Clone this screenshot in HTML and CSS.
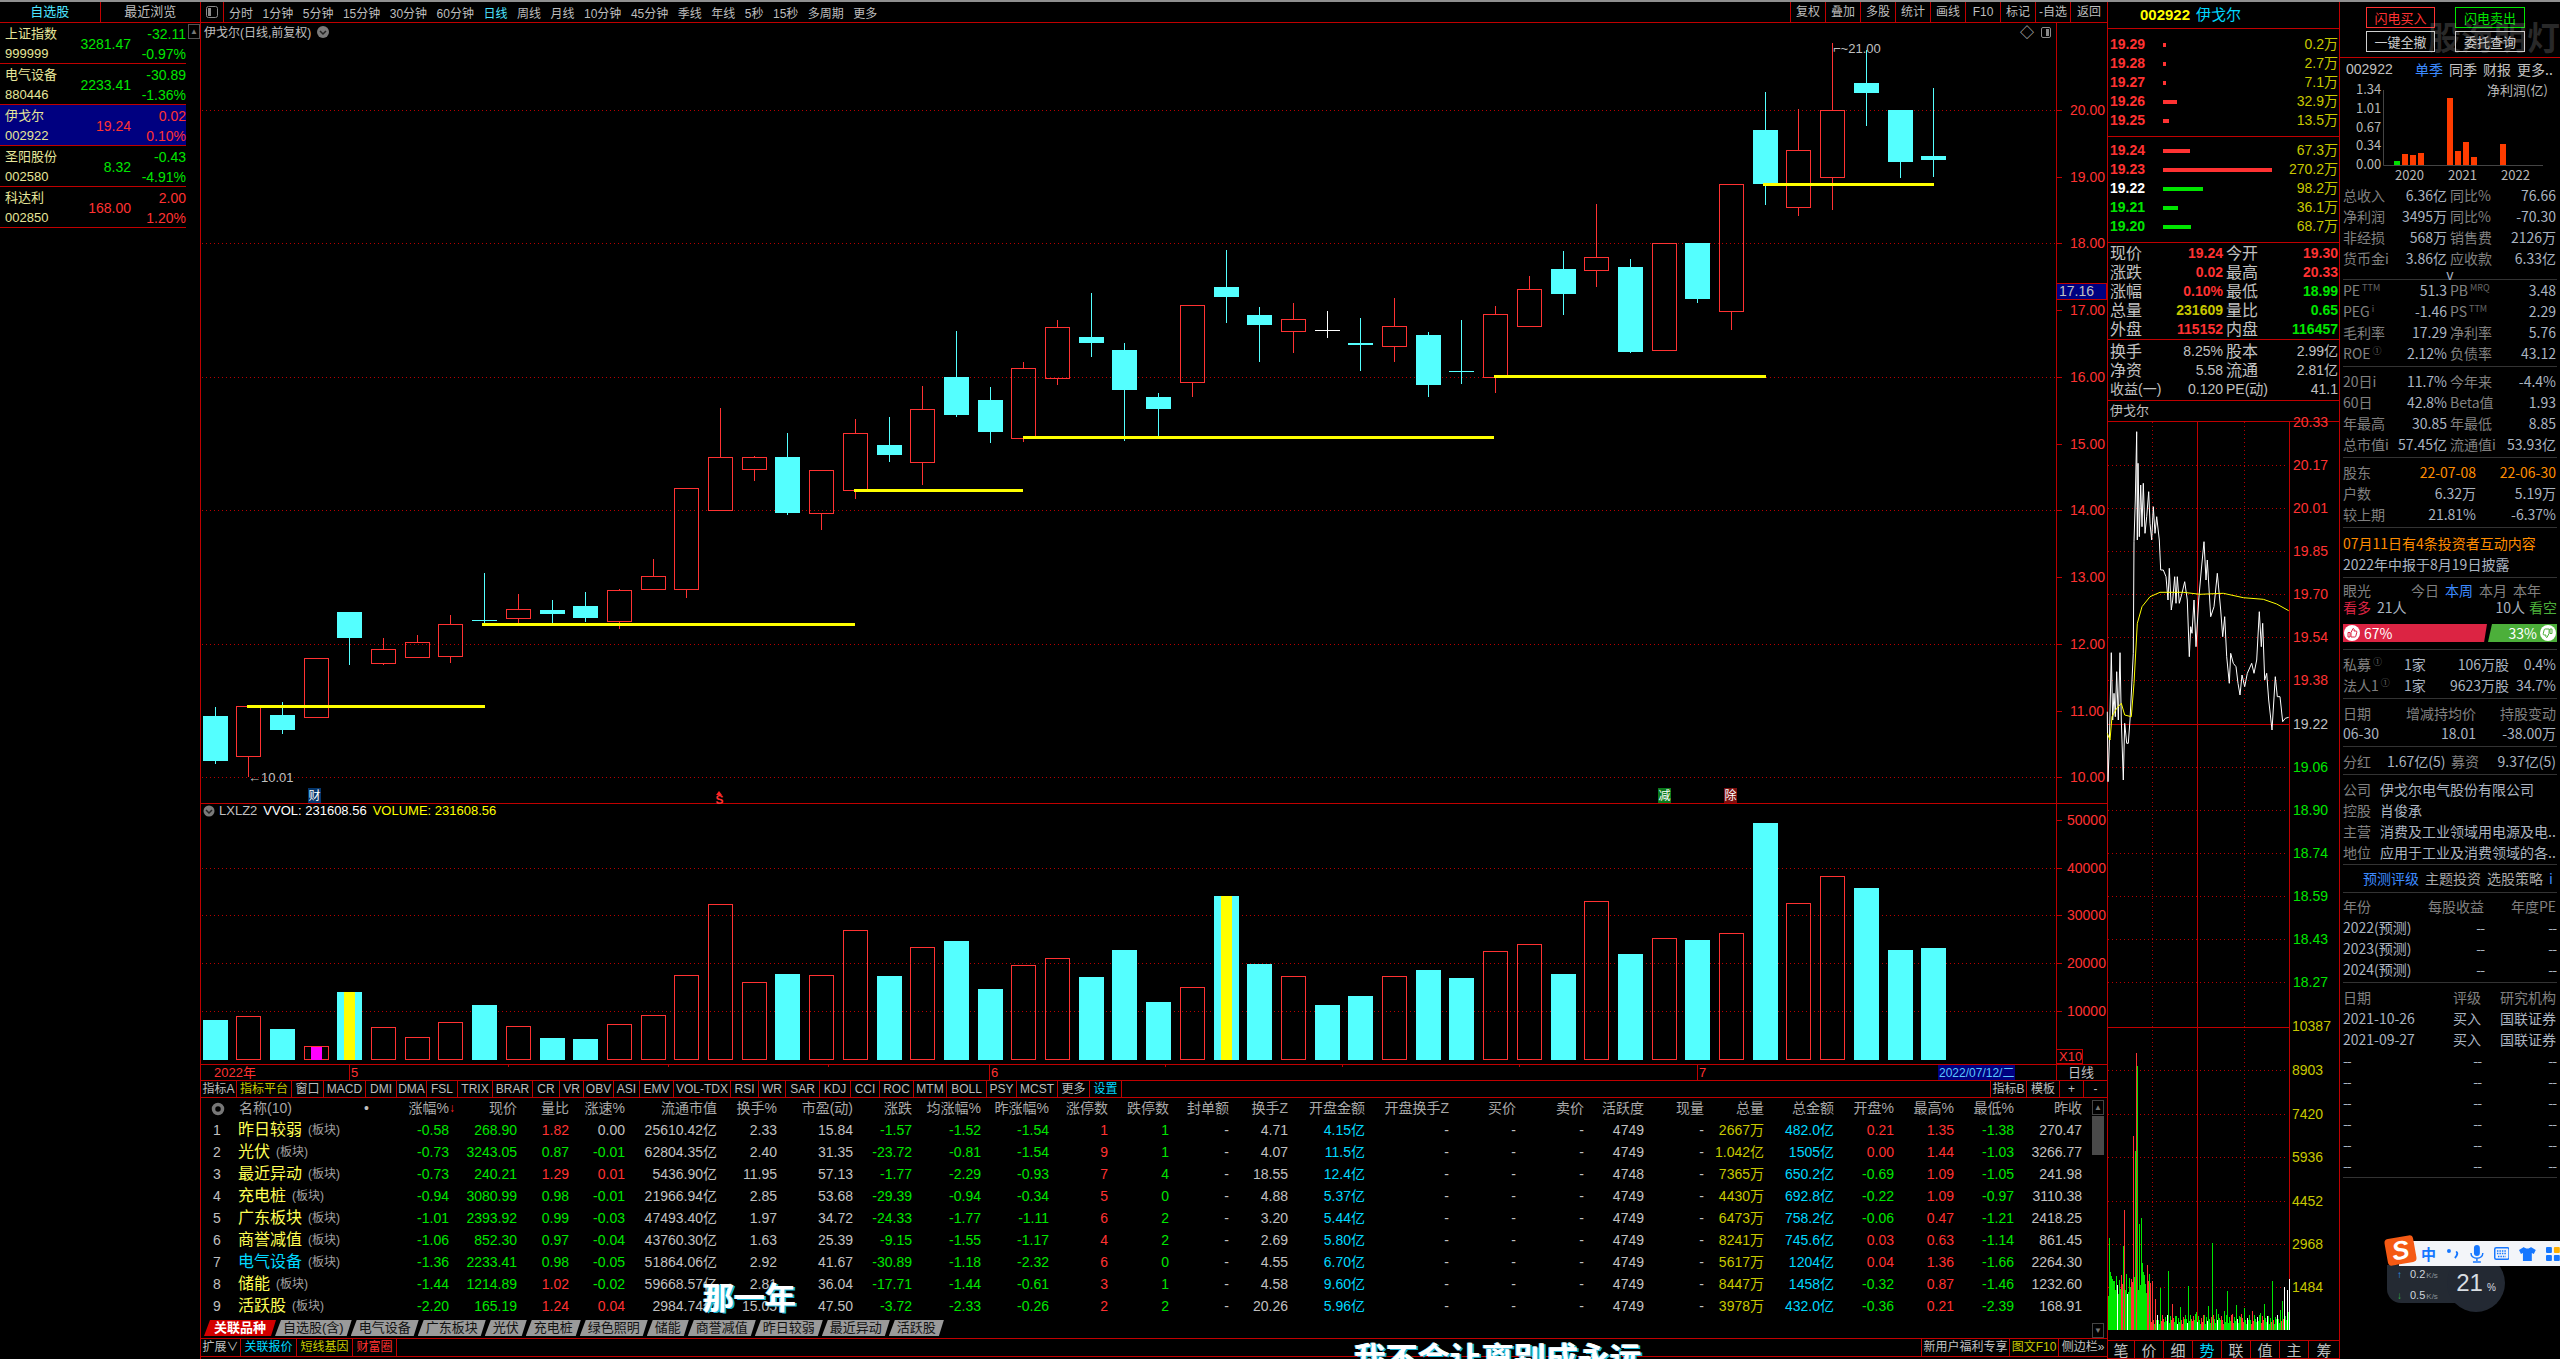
FILE: index.html
```html
<!DOCTYPE html>
<html lang="zh-CN">
<head>
<meta charset="utf-8">
<title>伊戈尔 002922</title>
<link rel="stylesheet" href="styles.css">
</head>
<body>
<div class="app">
  <aside class="left">
    <div class="ltabs"><span class="on">自选股</span><span>最近浏览</span></div>
    <div class="lbody">
      <div class="stocks">
        <div class="stock"><div class="nm">上证指数</div><div class="pr g">3281.47</div><div class="ch g">-32.11</div><div class="cd">999999</div><div class="ch g">-0.97%</div></div>
        <div class="stock"><div class="nm">电气设备</div><div class="pr g">2233.41</div><div class="ch g">-30.89</div><div class="cd">880446</div><div class="ch g">-1.36%</div></div>
        <div class="stock sel"><div class="nm">伊戈尔</div><div class="pr r">19.24</div><div class="ch r">0.02</div><div class="cd">002922</div><div class="ch r">0.10%</div></div>
        <div class="stock"><div class="nm">圣阳股份</div><div class="pr g">8.32</div><div class="ch g">-0.43</div><div class="cd">002580</div><div class="ch g">-4.91%</div></div>
        <div class="stock"><div class="nm">科达利</div><div class="pr r">168.00</div><div class="ch r">2.00</div><div class="cd">002850</div><div class="ch r">1.20%</div></div>
      </div>
      <div class="lscroll"><span class="arrow">▲</span></div>
    </div>
  </aside>

  <main class="main">
    <div class="toolbar">
      <span class="tb-icon"><svg width="12" height="12" viewBox="0 0 12 12"><rect x="0.5" y="0.5" width="11" height="11" rx="2" fill="none" stroke="#8a8a8a"/><rect x="2" y="2" width="3" height="8" fill="#8a8a8a"/></svg></span>
      <div class="periods"><span>分时</span><span>1分钟</span><span>5分钟</span><span>15分钟</span><span>30分钟</span><span>60分钟</span><span class="act">日线</span><span>周线</span><span>月线</span><span>10分钟</span><span>45分钟</span><span>季线</span><span>年线</span><span>5秒</span><span>15秒</span><span>多周期</span><span>更多</span></div>
      <div class="tools"><span>复权</span><span>叠加</span><span>多股</span><span>统计</span><span>画线</span><span>F10</span><span>标记</span><span>-自选</span><span>返回</span></div>
    </div>

    <svg id="kchart" class="kchart" width="1906" height="1057" viewBox="201 23 1906 1057">
      <g class="axis-lines">
        <line x1="2056.5" y1="23" x2="2056.5" y2="1064"/>
        <line x1="201" y1="803.5" x2="2107" y2="803.5"/>
        <line x1="201" y1="1064.5" x2="2107" y2="1064.5"/>
        <line x1="349.5" y1="1065" x2="349.5" y2="1080"/>
        <line x1="989.5" y1="1065" x2="989.5" y2="1080"/>
        <line x1="1697.5" y1="1065" x2="1697.5" y2="1080"/>
        <line x1="2056.5" y1="1065" x2="2056.5" y2="1080"/>
        <path d="M508.5 1064v3M668.5 1064v3M828.5 1064v3M1165.5 1064v3M1342.5 1064v3M1519.5 1064v3"/>
        <path d="M2056 110.5h6M2056 177.5h6M2056 243.5h6M2056 310.5h6M2056 377.5h6M2056 444.5h6M2056 510.5h6M2056 577.5h6M2056 644.5h6M2056 711.5h6M2056 777.5h6M2056 820.5h6M2056 868.5h6M2056 915.5h6M2056 963.5h6M2056 1011.5h6"/>
      </g>
      <g class="dots">
        <path d="M202 110.5H2055M202 243.5H2055M202 377.5H2055M202 510.5H2055M202 644.5H2055M202 777.5H2055M202 868.5H2055M202 915.5H2055M202 963.5H2055M202 1011.5H2055"/>
      </g>
      <g id="candles"></g>
      <g id="volumes"></g>
      <g class="trend">
        <path d="M247 706.5H485M482 624.5H855M854 490.5H1023M1023 437.5H1494M1494 376.5H1766M1763 184.5H1934"/>
      </g>
      <text class="t12 lgray" x="204" y="37">伊戈尔(日线,前复权)</text>
      <circle cx="323" cy="32" r="6" fill="#7a7a7a"/><path d="M320 31l3 3 3-3" fill="none" stroke="#222" stroke-width="1.5"/>
      <text class="t14 lgray" x="2020" y="37">◇</text>
      <rect x="2041.5" y="27.5" width="9" height="10" rx="1.5" fill="none" stroke="#8a8a8a"/><rect x="2046" y="29" width="3" height="7" fill="#8a8a8a"/>
      <text class="t13 lgray" x="1833" y="53">⌐~21.00</text>
      <text class="t13 lgray" x="248" y="782">←10.01</text>
      <rect x="308" y="788" width="13" height="15" fill="#04356b"/><text class="t12 white" x="308.500" y="800">财</text>
      <path d="M719 791l3 4h-6z" fill="#ff2020"/><text class="t12 bright b" x="715.500" y="804">S</text>
      <rect x="1658" y="788" width="13" height="15" fill="#0a7a1a"/><text class="t12 white" x="1658.500" y="800">减</text>
      <rect x="1724" y="788" width="13" height="15" fill="#7a1010"/><text class="t12 white" x="1724.500" y="800">除</text>
      <g class="ylabels bright">
        <text x="2070" y="115">20.00</text><text x="2070" y="182">19.00</text><text x="2070" y="248">18.00</text><text x="2070" y="315">17.00</text><text x="2070" y="382">16.00</text><text x="2070" y="449">15.00</text><text x="2070" y="515">14.00</text><text x="2070" y="582">13.00</text><text x="2070" y="649">12.00</text><text x="2070" y="716">11.00</text><text x="2070" y="782">10.00</text>
        <text x="2067" y="825">50000</text><text x="2067" y="873">40000</text><text x="2067" y="920">30000</text><text x="2067" y="968">20000</text><text x="2067" y="1016">10000</text>
      </g>
      <rect x="2056.5" y="283.500" width="50" height="16" fill="#000080" stroke="#c00000"/>
      <text class="t14 lgray" x="2059" y="296">17.16</text>
      <rect x="2056.500" y="1049.500" width="26" height="14" fill="none" stroke="#c00000"/>
      <text class="t13 bright" x="2059" y="1061">X10</text>
      <text class="t13" x="219" y="815"><tspan class="f-lgray">LXLZ2</tspan><tspan class="f-white" dx="6">VVOL: 231608.56</tspan><tspan class="f-yellow" dx="6">VOLUME: 231608.56</tspan></text>
      <circle cx="209" cy="811" r="5.500" fill="#7a7a7a"/><path d="M206 810l3 3 3-3" fill="none" stroke="#222" stroke-width="1.5"/>
      <text class="t13 bright" x="214" y="1077">2022年</text>
      <text class="t13 bright" x="351" y="1077">5</text>
      <text class="t13 bright" x="991" y="1077">6</text>
      <text class="t13 bright" x="1699" y="1077">7</text>
      <rect x="1938" y="1065" width="77" height="15" fill="#000080"/>
      <text class="t12 blue" x="1939" y="1077">2022/07/12/二</text>
      <text class="t13 lgray" x="2068" y="1077">日线</text>
    </svg>

    <div class="ind-bar">
      <div class="ind-tabs"><span>指标A</span><span class="y">指标平台</span><span>窗口</span><span>MACD</span><span>DMI</span><span>DMA</span><span>FSL</span><span>TRIX</span><span>BRAR</span><span>CR</span><span>VR</span><span>OBV</span><span>ASI</span><span>EMV</span><span>VOL-TDX</span><span>RSI</span><span>WR</span><span>SAR</span><span>KDJ</span><span>CCI</span><span>ROC</span><span>MTM</span><span>BOLL</span><span>PSY</span><span>MCST</span><span>更多</span><span class="c">设置</span></div>
      <div class="ind-right"><span>指标B</span><span>模板</span><span>+</span><span>-</span></div>
    </div>

    <div class="table-wrap">
      <div class="table">
        <div class="row head">
          <div class="name-h"><svg width="14" height="14" viewBox="0 0 14 14"><circle cx="7" cy="7" r="4.500" fill="none" stroke="#777" stroke-width="3.500"/></svg><span>名称(10)</span><b>•</b></div>
          <div>涨幅%<em class="darr">↓</em></div><div>现价</div><div>量比</div><div>涨速%</div><div>流通市值</div><div>换手%</div><div>市盈(动)</div><div>涨跌</div><div>均涨幅%</div><div>昨涨幅%</div><div>涨停数</div><div>跌停数</div><div>封单额</div><div>换手Z</div><div>开盘金额</div><div>开盘换手Z</div><div>买价</div><div>卖价</div><div>活跃度</div><div>现量</div><div>总量</div><div>总金额</div><div>开盘%</div><div>最高%</div><div>最低%</div><div>昨收</div>
        </div>
        <div class="row"><div class="name"><i>1</i><strong>昨日较弱</strong><small>(板块)</small></div><div class="g">-0.58</div><div class="g">268.90</div><div class="r">1.82</div><div>0.00</div><div>25610.42亿</div><div>2.33</div><div>15.84</div><div class="g">-1.57</div><div class="g">-1.52</div><div class="g">-1.54</div><div class="r">1</div><div class="g">1</div><div>-</div><div>4.71</div><div class="c">4.15亿</div><div>-</div><div>-</div><div>-</div><div>4749</div><div>-</div><div class="y">2667万</div><div class="c">482.0亿</div><div class="r">0.21</div><div class="r">1.35</div><div class="g">-1.38</div><div>270.47</div></div>
        <div class="row"><div class="name"><i>2</i><strong>光伏</strong><small>(板块)</small></div><div class="g">-0.73</div><div class="g">3243.05</div><div class="g">0.87</div><div class="g">-0.01</div><div>62804.35亿</div><div>2.40</div><div>31.35</div><div class="g">-23.72</div><div class="g">-0.81</div><div class="g">-1.54</div><div class="r">9</div><div class="g">1</div><div>-</div><div>4.07</div><div class="c">11.5亿</div><div>-</div><div>-</div><div>-</div><div>4749</div><div>-</div><div class="y">1.042亿</div><div class="c">1505亿</div><div class="r">0.00</div><div class="r">1.44</div><div class="g">-1.03</div><div>3266.77</div></div>
        <div class="row"><div class="name"><i>3</i><strong>最近异动</strong><small>(板块)</small></div><div class="g">-0.73</div><div class="g">240.21</div><div class="r">1.29</div><div class="r">0.01</div><div>5436.90亿</div><div>11.95</div><div>57.13</div><div class="g">-1.77</div><div class="g">-2.29</div><div class="g">-0.93</div><div class="r">7</div><div class="g">4</div><div>-</div><div>18.55</div><div class="c">12.4亿</div><div>-</div><div>-</div><div>-</div><div>4748</div><div>-</div><div class="y">7365万</div><div class="c">650.2亿</div><div class="g">-0.69</div><div class="r">1.09</div><div class="g">-1.05</div><div>241.98</div></div>
        <div class="row"><div class="name"><i>4</i><strong>充电桩</strong><small>(板块)</small></div><div class="g">-0.94</div><div class="g">3080.99</div><div class="g">0.98</div><div class="g">-0.01</div><div>21966.94亿</div><div>2.85</div><div>53.68</div><div class="g">-29.39</div><div class="g">-0.94</div><div class="g">-0.34</div><div class="r">5</div><div class="g">0</div><div>-</div><div>4.88</div><div class="c">5.37亿</div><div>-</div><div>-</div><div>-</div><div>4749</div><div>-</div><div class="y">4430万</div><div class="c">692.8亿</div><div class="g">-0.22</div><div class="r">1.09</div><div class="g">-0.97</div><div>3110.38</div></div>
        <div class="row"><div class="name"><i>5</i><strong>广东板块</strong><small>(板块)</small></div><div class="g">-1.01</div><div class="g">2393.92</div><div class="g">0.99</div><div class="g">-0.03</div><div>47493.40亿</div><div>1.97</div><div>34.72</div><div class="g">-24.33</div><div class="g">-1.77</div><div class="g">-1.11</div><div class="r">6</div><div class="g">2</div><div>-</div><div>3.20</div><div class="c">5.44亿</div><div>-</div><div>-</div><div>-</div><div>4749</div><div>-</div><div class="y">6473万</div><div class="c">758.2亿</div><div class="g">-0.06</div><div class="r">0.47</div><div class="g">-1.21</div><div>2418.25</div></div>
        <div class="row"><div class="name"><i>6</i><strong>商誉减值</strong><small>(板块)</small></div><div class="g">-1.06</div><div class="g">852.30</div><div class="g">0.97</div><div class="g">-0.04</div><div>43760.30亿</div><div>1.63</div><div>25.39</div><div class="g">-9.15</div><div class="g">-1.55</div><div class="g">-1.17</div><div class="r">4</div><div class="g">2</div><div>-</div><div>2.69</div><div class="c">5.80亿</div><div>-</div><div>-</div><div>-</div><div>4749</div><div>-</div><div class="y">8241万</div><div class="c">745.6亿</div><div class="r">0.03</div><div class="r">0.63</div><div class="g">-1.14</div><div>861.45</div></div>
        <div class="row"><div class="name"><i>7</i><strong class="c">电气设备</strong><small>(板块)</small></div><div class="g">-1.36</div><div class="g">2233.41</div><div class="g">0.98</div><div class="g">-0.05</div><div>51864.06亿</div><div>2.92</div><div>41.67</div><div class="g">-30.89</div><div class="g">-1.18</div><div class="g">-2.32</div><div class="r">6</div><div class="g">0</div><div>-</div><div>4.55</div><div class="c">6.70亿</div><div>-</div><div>-</div><div>-</div><div>4749</div><div>-</div><div class="y">5617万</div><div class="c">1204亿</div><div class="r">0.04</div><div class="r">1.36</div><div class="g">-1.66</div><div>2264.30</div></div>
        <div class="row"><div class="name"><i>8</i><strong>储能</strong><small>(板块)</small></div><div class="g">-1.44</div><div class="g">1214.89</div><div class="r">1.02</div><div class="g">-0.02</div><div>59668.57亿</div><div>2.81</div><div>36.04</div><div class="g">-17.71</div><div class="g">-1.44</div><div class="g">-0.61</div><div class="r">3</div><div class="g">1</div><div>-</div><div>4.58</div><div class="c">9.60亿</div><div>-</div><div>-</div><div>-</div><div>4749</div><div>-</div><div class="y">8447万</div><div class="c">1458亿</div><div class="g">-0.32</div><div class="r">0.87</div><div class="g">-1.46</div><div>1232.60</div></div>
        <div class="row"><div class="name"><i>9</i><strong>活跃股</strong><small>(板块)</small></div><div class="g">-2.20</div><div class="g">165.19</div><div class="r">1.24</div><div class="r">0.04</div><div>2984.74亿</div><div>15.05</div><div>47.50</div><div class="g">-3.72</div><div class="g">-2.33</div><div class="g">-0.26</div><div class="r">2</div><div class="g">2</div><div>-</div><div>20.26</div><div class="c">5.96亿</div><div>-</div><div>-</div><div>-</div><div>4749</div><div>-</div><div class="y">3978万</div><div class="c">432.0亿</div><div class="g">-0.36</div><div class="r">0.21</div><div class="g">-2.39</div><div>168.91</div></div>
      </div>
      <div class="tscroll"><span class="arrow">▲</span><span class="thumb"></span><span class="arrow bottom">▼</span></div>
      <div class="sheets"><span class="on">关联品种</span><span>自选股(含)</span><span>电气设备</span><span>广东板块</span><span>光伏</span><span>充电桩</span><span>绿色照明</span><span>储能</span><span>商誉减值</span><span>昨日较弱</span><span>最近异动</span><span>活跃股</span></div>
    </div>

    <div class="bottombar">
      <div class="bb-left"><span>扩展∨</span><span class="c">关联报价</span><span class="y">短线基因</span><span class="r">财富圈</span></div>
      <div class="bb-right"><span>新用户福利专享</span><span class="y">图文F10</span><span>侧边栏»</span></div>
    </div>
  </main>

  <section class="quote">
    <div class="q-head"><span class="code">002922</span><span class="qname">伊戈尔</span></div>
    <div class="book sell">
      <div class="brow"><span class="r">19.29</span><span class="bar"><i class="redb" style="width:3px"></i></span><span class="y">0.2万</span></div>
      <div class="brow"><span class="r">19.28</span><span class="bar"><i class="redb" style="width:3px"></i></span><span class="y">2.7万</span></div>
      <div class="brow"><span class="r">19.27</span><span class="bar"><i class="redb" style="width:3px"></i></span><span class="y">7.1万</span></div>
      <div class="brow"><span class="r">19.26</span><span class="bar"><i class="redb" style="width:14px"></i></span><span class="y">32.9万</span></div>
      <div class="brow"><span class="r">19.25</span><span class="bar"><i class="redb" style="width:6px"></i></span><span class="y">13.5万</span></div>
    </div>
    <div class="book buy">
      <div class="brow"><span class="r">19.24</span><span class="bar"><i class="redb" style="width:27px"></i></span><span class="y">67.3万</span></div>
      <div class="brow"><span class="r">19.23</span><span class="bar"><i class="redb" style="width:109px"></i></span><span class="y">270.2万</span></div>
      <div class="brow"><span class="white">19.22</span><span class="bar"><i class="greenb" style="width:40px"></i></span><span class="y">98.2万</span></div>
      <div class="brow"><span class="g">19.21</span><span class="bar"><i class="greenb" style="width:15px"></i></span><span class="y">36.1万</span></div>
      <div class="brow"><span class="g">19.20</span><span class="bar"><i class="greenb" style="width:28px"></i></span><span class="y">68.7万</span></div>
    </div>
    <div class="qblock">
      <div class="qrow"><span>现价</span><b class="r">19.24</b><span>今开</span><b class="r">19.30</b></div>
      <div class="qrow"><span>涨跌</span><b class="r">0.02</b><span>最高</span><b class="r">20.33</b></div>
      <div class="qrow"><span>涨幅</span><b class="r">0.10%</b><span>最低</span><b class="g">18.99</b></div>
      <div class="qrow"><span>总量</span><b class="y">231609</b><span>量比</span><b class="g">0.65</b></div>
      <div class="qrow"><span>外盘</span><b class="r">115152</b><span>内盘</span><b class="g">116457</b></div>
    </div>
    <div class="qblock second">
      <div class="qrow"><span>换手</span><b class="lg">8.25%</b><span>股本</span><b class="lg">2.99亿</b></div>
      <div class="qrow"><span>净资</span><b class="lg">5.58</b><span>流通</span><b class="lg">2.81亿</b></div>
      <div class="qrow"><span>收益(一)</span><b class="lg">0.120</b><span>PE(动)</span><b class="lg">41.1</b></div>
    </div>
    <div class="minute-title">伊戈尔</div>
    <svg id="minute" class="minute" width="232" height="908" viewBox="2108 422 232 908">
      <g class="dots">
        <path d="M2108 465.500H2288M2108 508.500H2288M2108 551.500H2288M2108 594.500H2288M2108 637.500H2288M2108 680.500H2288M2108 767.500H2288M2108 810.500H2288M2108 853.500H2288M2108 896.500H2288M2108 939.500H2288M2108 982.500H2288M2108 1070.500H2288M2108 1114.500H2288M2108 1157.500H2288M2108 1201.500H2288M2108 1244.500H2288M2108 1287.500H2288"/>
        <path d="M2152.500 422V1330M2244.500 422V1330"/>
      </g>
      <g class="axis-lines">
        <path d="M2197.500 422V1330M2289.500 422V1330M2108 724.500H2289M2108 1027.500H2289"/>
      </g>
      <g id="mvol"></g>
      <path id="mline" class="mline"/>
      <path id="mavg" class="mavg"/>
      <g class="ylabels">
        <text class="bright" x="2293" y="427">20.33</text><text class="bright" x="2293" y="470">20.17</text><text class="bright" x="2293" y="513">20.01</text><text class="bright" x="2293" y="556">19.85</text><text class="bright" x="2293" y="599">19.70</text><text class="bright" x="2293" y="642">19.54</text><text class="bright" x="2293" y="685">19.38</text>
        <text class="lgray" x="2293" y="729">19.22</text>
        <text class="green" x="2293" y="772">19.06</text><text class="green" x="2293" y="815">18.90</text><text class="green" x="2293" y="858">18.74</text><text class="green" x="2293" y="901">18.59</text><text class="green" x="2293" y="944">18.43</text><text class="green" x="2293" y="987">18.27</text>
        <text class="olive" x="2292" y="1031">10387</text><text class="olive" x="2292" y="1075">8903</text><text class="olive" x="2292" y="1119">7420</text><text class="olive" x="2292" y="1162">5936</text><text class="olive" x="2292" y="1206">4452</text><text class="olive" x="2292" y="1249">2968</text><text class="olive" x="2292" y="1292">1484</text>
      </g>
    </svg>
    <div class="mtabs"><span>笔</span><span>价</span><span>细</span><span class="c">势</span><span>联</span><span>值</span><span>主</span><span>筹</span></div>
  </section>

  <aside class="right">
    <div class="trade">
      <span class="btn red">闪电买入</span><span class="btn green">闪电卖出</span><span class="btn plain">一键全撤</span><span class="btn plain">委托查询</span>
    </div>
    <div class="fin-head"><span class="fh-code">002922</span><span class="blue">单季</span><span>同季</span><span>财报</span><span>更多..</span></div>
    <svg class="mini" width="219" height="105" viewBox="2341 80 219 105">
      <g class="mini-t">
        <text x="2357" y="94">1.34</text><text x="2357" y="113">1.01</text><text x="2357" y="132">0.67</text><text x="2357" y="150">0.34</text><text x="2357" y="169">0.00</text>
        <text x="2488" y="95">净利润(亿)</text>
        <text x="2396" y="180">2020</text><text x="2449" y="180">2021</text><text x="2502" y="180">2022</text>
      </g>
      <path d="M2384.500 90V165.500H2544" fill="none" stroke="#444"/>
      <rect x="2395" y="161" width="6" height="4" fill="#00e000"/>
      <g fill="#ff3c00">
        <rect x="2403" y="154" width="6" height="11"/><rect x="2411" y="155" width="6" height="10"/><rect x="2419" y="153" width="6" height="12"/><rect x="2448" y="98" width="6" height="67"/><rect x="2456" y="151" width="6" height="14"/><rect x="2464" y="142" width="6" height="23"/><rect x="2472" y="157" width="6" height="8"/><rect x="2501" y="144" width="6" height="21"/>
      </g>
    </svg>
    <div class="sec s-fin">
      <div class="r4"><span>总收入</span><b>6.36亿</b><span>同比%</span><b>76.66</b></div>
      <div class="r4"><span>净利润</span><b>3495万</b><span>同比%</span><b>-70.30</b></div>
      <div class="r4"><span>非经损</span><b>568万</b><span>销售费</span><b>2126万</b></div>
      <div class="r4"><span>货币金i</span><b>3.86亿</b><span>应收款</span><b>6.33亿</b></div>
      <div class="more">v</div>
    </div>
    <div class="sec s-pe">
      <div class="r4"><span>PE<sup>TTM</sup></span><b>51.3</b><span>PB<sup>MRQ</sup></span><b>3.48</b></div>
      <div class="r4"><span>PEG<sup>i</sup></span><b>-1.46</b><span>PS<sup>TTM</sup></span><b>2.29</b></div>
      <div class="r4"><span>毛利率</span><b>17.29</b><span>净利率</span><b>5.76</b></div>
      <div class="r4"><span>ROE<sup>①</sup></span><b>2.12%</b><span>负债率</span><b>43.12</b></div>
    </div>
    <div class="sec">
      <div class="r4"><span>20日i</span><b>11.7%</b><span>今年来</span><b>-4.4%</b></div>
      <div class="r4"><span>60日</span><b>42.8%</b><span>Beta值</span><b>1.93</b></div>
      <div class="r4"><span>年最高</span><b>30.85</b><span>年最低</span><b>8.85</b></div>
      <div class="r4"><span>总市值i</span><b>57.45亿</b><span>流通值i</span><b>53.93亿</b></div>
    </div>
    <div class="sec">
      <div class="r3"><span>股东</span><b class="o">22-07-08</b><b class="o">22-06-30</b></div>
      <div class="r3"><span>户数</span><b>6.32万</b><b>5.19万</b></div>
      <div class="r3"><span>较上期</span><b>21.81%</b><b>-6.37%</b></div>
    </div>
    <div class="sec s-notice">
      <div class="line o">07月11日有4条投资者互动内容</div>
      <div class="line val">2022年中报于8月19日披露</div>
    </div>
    <div class="sec s-vote">
      <div class="vh"><span class="vt">眼光</span><span>今日</span><span class="blue">本周</span><span>本月</span><span>本年</span></div>
      <div class="vc"><span class="vr">看多</span><span class="val">21人</span><span class="val vgap">10人</span><span class="vg">看空</span></div>
      <div class="vbar">
        <div class="vred"><svg width="16" height="16" viewBox="0 0 16 16"><circle cx="8" cy="8" r="8" fill="#fff"/><path d="M4 7.500h2v4.500H4zM7 7.500l2-4c1 0 1.500 1 1 2.500h2c.6 0 1 .5.8 1.200l-1 4c-.1.500-.4.800-1 .800H7z" fill="none" stroke="#dc2443"/></svg><span>67%</span></div>
        <div class="vgreen"><span>33%</span><svg width="16" height="16" viewBox="0 0 16 16"><circle cx="8" cy="8" r="8" fill="#fff"/><path d="M12 8.500h-2V4h2zM9 8.500l-2 4c-1 0-1.500-1-1-2.500H4c-.6 0-1-.5-.8-1.200l1-4c.1-.5.4-.8 1-.8h4z" fill="none" stroke="#4caf3a"/></svg></div>
      </div>
    </div>
    <div class="sec">
      <div class="r5"><span>私募<sup>①</sup></span><b class="lft">1家</b><b>106万股</b><b>0.4%</b></div>
      <div class="r5"><span>法人1<sup>①</sup></span><b class="lft">1家</b><b>9623万股</b><b>34.7%</b></div>
    </div>
    <div class="sec s-hold">
      <div class="r3"><span>日期</span><span class="rt">增减持均价</span><span class="rt">持股变动</span></div>
      <div class="r3"><b class="lft">06-30</b><b>18.01</b><b>-38.00万</b></div>
    </div>
    <div class="sec s-div">
      <div class="rdiv"><span>分红</span><b>1.67亿(5)</b><span class="mz">募资</span><b class="end">9.37亿(5)</b></div>
    </div>
    <div class="sec s-co">
      <div class="rc"><span>公司</span><b>伊戈尔电气股份有限公司</b></div>
      <div class="rc"><span>控股</span><b>肖俊承</b></div>
      <div class="rc"><span>主营</span><b>消费及工业领域用电源及电..</b></div>
      <div class="rc"><span>地位</span><b>应用于工业及消费领域的各..</b></div>
    </div>
    <div class="sec s-tabs">
      <div class="ftabs"><span class="blue">预测评级</span><span>主题投资</span><span>选股策略</span><span class="blue">i</span></div>
    </div>
    <div class="sec s-fc">
      <div class="rf"><span>年份</span><span class="rt">每股收益</span><span class="rt">年度PE</span></div>
      <div class="rf"><b class="lft">2022(预测)</b><b class="dash">--</b><b class="dash">--</b></div>
      <div class="rf"><b class="lft">2023(预测)</b><b class="dash">--</b><b class="dash">--</b></div>
      <div class="rf"><b class="lft">2024(预测)</b><b class="dash">--</b><b class="dash">--</b></div>
    </div>
    <div class="sec s-rate">
      <div class="rr"><span>日期</span><span class="rt">评级</span><span class="rt">研究机构</span></div>
      <div class="rr"><b class="lft">2021-10-26</b><b>买入</b><b>国联证券</b></div>
      <div class="rr"><b class="lft">2021-09-27</b><b>买入</b><b>国联证券</b></div>
      <div class="rr"><b class="lft dash">--</b><b class="dash">--</b><b class="dash">--</b></div>
      <div class="rr"><b class="lft dash">--</b><b class="dash">--</b><b class="dash">--</b></div>
      <div class="rr"><b class="lft dash">--</b><b class="dash">--</b><b class="dash">--</b></div>
      <div class="rr"><b class="lft dash">--</b><b class="dash">--</b><b class="dash">--</b></div>
      <div class="rr"><b class="lft dash">--</b><b class="dash">--</b><b class="dash">--</b></div>
      <div class="rr"><b class="lft dash">--</b><b class="dash">--</b><b class="dash">--</b></div>
    </div>
  </aside>
</div>

<div class="watermark">股海明灯</div>
<div class="subtitle s1">那一年</div>
<div class="subtitle s2">我不会让离别成永远</div>

<div class="ime">
  <div class="net"><span class="up">↑</span><b>0.2</b><small>K/s</small><br><span class="down">↓</span><b>0.5</b><small>K/s</small></div>
  <div class="cpu"><span>21</span><small>%</small></div>
  <div class="imebar">
    <span class="zh">中</span>
    <svg width="14" height="16" viewBox="0 0 14 16"><circle cx="3" cy="5" r="2" fill="#1677ff"/><path d="M10 6c2 0 2 3-1 6" fill="none" stroke="#1677ff" stroke-width="2"/></svg>
    <svg width="14" height="18" viewBox="0 0 14 18"><rect x="4" y="0" width="6" height="11" rx="3" fill="#1677ff"/><path d="M1 8c0 7 12 7 12 0M7 13v3M3 17h8" fill="none" stroke="#1677ff" stroke-width="1.500"/></svg>
    <svg width="16" height="13" viewBox="0 0 16 13"><rect x=".75" y=".75" width="14.500" height="11.500" rx="1.500" fill="none" stroke="#1677ff" stroke-width="1.500"/><path d="M3 4h10M3 6.500h10M4 9.500h8" stroke="#1677ff" stroke-width="1.500" stroke-dasharray="1.500 1"/></svg>
    <svg width="17" height="14" viewBox="0 0 17 14"><path d="M5 0 0 3l2 4 2-1v8h9V6l2 1 2-4-5-3c-1 2-6 2-7 0z" fill="#1677ff"/></svg>
    <svg width="14" height="14" viewBox="0 0 14 14"><g fill="#1677ff"><rect width="6" height="6" rx="1"/><rect x="8" width="6" height="6" rx="1" fill="#ffb000"/><rect y="8" width="6" height="6" rx="1"/><rect x="8" y="8" width="6" height="6" rx="1"/></g></svg>
  </div>
  <div class="sogou"><span>S</span></div>
</div>

<script src="chart.js"></script>
</body>
</html>
```

FILE: styles.css
```css
* { box-sizing: border-box; }
html, body { margin: 0; padding: 0; background: #000; overflow: hidden; width: 2560px; height: 1359px; position: relative; }
body { font: 14px "Liberation Sans", "Noto Sans CJK SC", sans-serif; color: #c0c0c0; }
.g { color: #00e600; } .r { color: #ff3232; } .y { color: #c8c800; } .c { color: #00d8ff; } .white { color: #fff; }
.app { display: flex; width: 2560px; height: 1359px; border-top: 2px solid #8f8f8f; }

/* left */
.left { width: 200px; flex: none; }
.ltabs { display: flex; height: 21px; border-bottom: 1px solid #c00000; font-size: 13px; }
.ltabs span { flex: 1; text-align: center; line-height: 20px; color: #bdbdbd; border-right: 1px solid #c00000; }
.ltabs span.on { color: #4de4ff; }
.ltabs span:last-child { border-right: 0; }
.lbody { display: flex; }
.stocks { width: 186px; }
.stock { display: grid; grid-template-columns: 66px 60px 55px; grid-template-rows: 20px 19px; height: 41px; padding: 1px 0 0 5px; border-bottom: 1px solid #c00000; align-items: center; line-height: 20px; }
.stock.sel { background: #000080; }
.nm { font-size: 13px; color: #e6e69a; }
.cd { font-size: 13px; color: #e6e69a; }
.pr { grid-column: 2; grid-row: 1 / 3; text-align: right; }
.ch { text-align: right; }
.lscroll { width: 14px; padding: 1px 0 0 2px; }
.arrow { display: block; width: 12px; height: 15px; border: 1px solid #555; font-size: 8px; line-height: 13px; text-align: center; color: #777; }

/* main */
.main { width: 1907px; flex: none; border-left: 1px solid #c00000; }
.toolbar { display: flex; height: 21px; border-bottom: 1px solid #c00000; align-items: center; font-size: 12px; color: #bdbdbd; }
.tb-icon { width: 23px; height: 20px; border-right: 1px solid #c00000; display: flex; align-items: center; justify-content: center; }
.periods { display: flex; gap: 9.5px; padding-left: 5px; white-space: nowrap; }
.periods .act { color: #4de4ff; }
.tools { margin-left: auto; display: grid; grid-template-columns: repeat(8, 35px) 37px; height: 20px; font-size: 12px; }
.tools span { border-left: 1px solid #c00000; text-align: center; line-height: 20px; }
.kchart { display: block; }
.axis-lines line, .axis-lines path { stroke: #c00000; fill: none; shape-rendering: crispEdges; }
.dots path { stroke: #b80000; stroke-dasharray: 1 3; fill: none; shape-rendering: crispEdges; }
.trend path { stroke: #ffff00; stroke-width: 3; fill: none; shape-rendering: crispEdges; }
.t12 { font: 12px "Liberation Sans", "Noto Sans CJK SC", sans-serif; }
.t13 { font: 13px "Liberation Sans", "Noto Sans CJK SC", sans-serif; }
.t14 { font: 14px "Liberation Sans", "Noto Sans CJK SC", sans-serif; }
.b { font-weight: bold; }
.lgray, .f-lgray { fill: #c0c0c0; } .white, .f-white { fill: #fff; } .f-yellow { fill: #ffff00; }
.bright { fill: #ff3232; } .green { fill: #00e600; } .olive { fill: #c8c800; } .blue { fill: #5cc8ff; }
.ylabels text { font: 14px "Liberation Sans", sans-serif; }

/* indicator tabs */
.ind-bar { display: flex; height: 18px; border-top: 1px solid #c00000; border-bottom: 1px solid #c00000; font-size: 12px; color: #bdbdbd; }
.ind-tabs { display: grid; grid-template-columns: 36px 55px 32px 42px 31px 30px 31px 35px 40px 27px 24px 30px 26px 34px 57px 28px 27px 34px 31px 29px 34px 33px 40px 30px 41px 32px 32px; }
.ind-tabs span, .ind-right span { border-right: 1px solid #c00000; text-align: center; line-height: 16px; white-space: nowrap; overflow: hidden; }
.ind-right { margin-left: auto; display: grid; grid-template-columns: 37px 33px 24px 23px; }
.ind-right span:first-child { border-left: 1px solid #c00000; }
.ind-right span:last-child { border-right: 0; }

/* table */
.table-wrap { position: relative; height: 240px; }
.table { font-size: 14px; }
.row { display: grid; grid-template-columns: 199px 49px 68px 52px 56px 92px 60px 76px 59px 69px 68px 59px 61px 60px 59px 77px 84px 67px 68px 60px 60px 60px 70px 60px 60px 60px 68px; grid-auto-rows: 22px; height: 22px; line-height: 22px; align-items: center; text-align: right; white-space: nowrap; }
.row.head { height: 21px; grid-auto-rows: 21px; line-height: 21px; color: #a8a8a8; }
.name { display: flex; align-items: center; text-align: left; padding-left: 12px; }
.name i { font-style: normal; width: 25px; color: #c0c0c0; }
.name strong { font-weight: normal; font-size: 16px; color: #ffff54; }
.name strong.c { color: #00d8ff; }
.name small { font-size: 12px; color: #a0a0a0; margin-left: 6px; }
.name-h { display: flex; align-items: center; text-align: left; padding-left: 10px; }
.name-h span { margin-left: 14px; width: 125px; }
.name-h b { color: #c0c0c0; font-weight: normal; }
.darr { color: #ff2020; font-style: normal; position: absolute; margin-left: 0; font-size: 12px; }
.tscroll { position: absolute; right: 3px; top: 2px; width: 12px; height: 238px; }
.tscroll .arrow { border-color: #444; }
.tscroll .thumb { display: block; height: 39px; margin-top: 1px; background: #4a4a4a; }
.tscroll .bottom { position: absolute; bottom: 0; }
.sheets { display: flex; margin: 3px 0 0 3px; height: 16px; font-size: 13px; color: #111; }
.sheets span { padding: 0 8px; margin-right: -1px; line-height: 16px; background: #9a9a9a; clip-path: polygon(6px 0, 100% 0, calc(100% - 5px) 100%, 0 100%); white-space: nowrap; }
.sheets span.on { background: #d40000; color: #fff; font-weight: bold; padding: 0 10px; }
.bottombar { display: flex; height: 19px; border-top: 1px solid #c00000; border-bottom: 1px solid #c00000; font-size: 12px; }
.bb-left { display: grid; grid-template-columns: 40px 56px 56px 44px; }
.bb-left span { text-align: center; border-right: 1px solid #c00000; line-height: 17px; white-space: nowrap; }
.bb-right { margin-left: auto; display: grid; grid-template-columns: 88px 49px 49px; }
.bb-right span { text-align: center; line-height: 17px; border-left: 1px solid #c00000; white-space: nowrap; }

/* quote */
.quote { width: 233px; flex: none; border-left: 1px solid #c00000; border-right: 1px solid #c00000; height: 1357px; border-bottom: 1px solid #c00000; }
.q-head { height: 27px; border-bottom: 1px solid #c00000; padding-left: 32px; font-size: 15px; line-height: 26px; display: flex; gap: 6px; }
.q-head .code { color: #ffff00; font-weight: bold; }
.q-head .qname { color: #00d8ff; }
.book { border-bottom: 1px solid #c00000; }
.book.sell { height: 108px; padding-top: 6px; }
.book.buy { height: 106px; padding-top: 4px; }
.brow { display: grid; grid-template-columns: 53px 1fr auto; height: 19px; line-height: 19px; align-items: center; padding: 0 1px 0 2px; font-weight: bold; }
.brow .y { font-weight: normal; }
.bar { display: flex; align-items: center; }
.bar i { display: block; height: 4px; }
.redb { background: #ff3232; } .greenb { background: #00e600; }
.qblock { border-bottom: 1px solid #c00000; padding: 1px 1px 0 2px; height: 97px; }
.qblock.second { height: 61px; padding-top: 2px; }
.qrow { display: grid; grid-template-columns: 50px 63px 51px 1fr; grid-auto-rows: 19px; height: 19px; line-height: 19px; align-items: center; }
.qrow span { font-size: 16px; color: #c0c0c0; white-space: nowrap; }
.qrow b { text-align: right; font-size: 14px; }
.qrow span:nth-child(3) { padding-left: 3px; }
.qrow b:nth-child(2) { margin-left: -28px; width: 91px; }
.qrow .lg { color: #c0c0c0; font-weight: normal; }
.second .qrow:last-child span { font-size: 14px; }
.minute-title { height: 21px; border-bottom: 1px solid #c00000; font-size: 13px; line-height: 20px; padding-left: 2px; color: #c0c0c0; }
.minute { display: block; overflow: visible; }
.mline { stroke: #fff; fill: none; stroke-width: 1; }
.mavg { stroke: #ffff00; fill: none; stroke-width: 1; }
.mtabs { display: grid; grid-template-columns: 27px repeat(6, 29px) 1fr; height: 28px; border-top: 1px solid #c00000; margin-top: 10px; font-size: 15px; }
.mtabs span { border-right: 1px solid #c00000; text-align: center; line-height: 19px; color: #c0c0c0; }
.mtabs span:last-child { border: 0; }
.mtabs .c { color: #00d8ff; }

/* right */
.right { width: 220px; flex: none; padding: 0; font: 14px "Noto Sans CJK SC", "Liberation Sans", sans-serif; color: #808080; }
.trade { height: 56px; border-bottom: 1px solid #c00000; display: grid; grid-template-columns: 69px 70px; grid-template-rows: 21px 21px; gap: 3px 20px; padding: 5px 0 0 26px; font-size: 13px; }
.btn { text-align: center; line-height: 19px; border: 1px solid; white-space: nowrap; }
.btn.red { color: #ff3232; border-color: #ff3232; } .btn.green { color: #00e600; border-color: #00e600; } .btn.plain { color: #d0d0d0; border-color: #d0d0d0; }
.fin-head { height: 22px; display: flex; align-items: center; padding-left: 6px; color: #c0c0c0; line-height: 22px; }
.fh-code { width: 69px; font-family: "Liberation Sans", sans-serif; color: #c0c0c0; }
.fin-head span:not(.fh-code) { margin-right: 6px; white-space: nowrap; }
.fin-head .blue, .right span.blue { color: #3d8bff; fill: none; }
.mini { display: block; }
.mini-t text { font: 13px "Noto Sans CJK SC", "Liberation Sans", sans-serif; fill: #b8b8b8; }
.sec { margin: 0 3px 0 3px; border-bottom: 1px solid #333; padding: 4px 0 2px 0; }
.right b { font-weight: normal; color: #aab4c0; white-space: nowrap; }
.right b.dash { letter-spacing: -1px; }
.r4 { display: grid; grid-template-columns: 46px 58px 48px 61px; height: 21px; line-height: 21px; white-space: nowrap; }
.r4 b { text-align: right; } .r4 span:nth-child(3) { padding-left: 3px; }
sup { font-size: 9px; line-height: 0; vertical-align: 5px; margin-left: 2px; color: #666; }
.s-fin { padding: 0; height: 95px; }
.more { text-align: center; line-height: 10px; padding-right: 0; color: #aab4c0; }
.s-pe { padding: 0 0 2px; }
.r3 { display: grid; grid-template-columns: 53px 80px 80px; height: 21px; line-height: 21px; text-align: right; }
.r3 > :first-child { text-align: left; }
.right b.o, .o { color: #ff8c00; }
.lft { text-align: left; display: block; }
.right b.lft { text-align: left; }
.rt { text-align: right; white-space: nowrap; }
.line { height: 21px; line-height: 21px; white-space: nowrap; }
.val { color: #aab4c0; }
.s-notice { padding-top: 5px; }
.s-vote { padding: 2px 0 0; height: 72px; }
.vh { display: flex; height: 20px; line-height: 20px; }
.vh span { margin-left: 6px; }
.vh .vt { margin: 0 34px 0 0; }
.vc { display: flex; height: 20px; line-height: 18px; margin-top: -2px; }
.vr { color: #dc2443; } .vg { color: #4caf3a; }
.vc .val { margin-left: 6px; } .vc .vgap { margin-left: auto; margin-right: 4px; }
.vbar { display: flex; height: 18px; margin-top: 6px; color: #fff; font-size: 14px; }
.vred { width: 144px; background: #dc2443; clip-path: polygon(0 0, 100% 0, 98% 100%, 0 100%); display: flex; align-items: center; gap: 4px; padding-left: 1px; }
.vgreen { flex: 1; margin-left: 1px; background: #4caf3a; clip-path: polygon(4px 0, 100% 0, 100% 100%, 0 100%); display: flex; align-items: center; justify-content: flex-end; gap: 3px; padding-right: 1px; }
.r5 { display: grid; grid-template-columns: 61px 40px 65px 47px; height: 21px; line-height: 21px; text-align: right; }
.r5 > :first-child { text-align: left; white-space: nowrap; }
.s-hold { height: 48px; padding: 4px 0 0; }
.s-hold .r3 { height: 20px; line-height: 20px; }
.s-div { height: 28px; padding: 4px 0 0; }
.rdiv { display: grid; grid-template-columns: 44px 68px 21px 80px; height: 20px; line-height: 20px; white-space: nowrap; }
.rdiv .mz { text-align: right; width: 28px; margin-left: -4px; }
.rdiv .end { text-align: right; }
.s-co { padding: 4px 0 1px; }
.rc { display: grid; grid-template-columns: 37px 1fr; height: 21px; line-height: 21px; white-space: nowrap; overflow: hidden; }
.s-tabs { padding: 2px 0 3px; height: 28px; }
.ftabs { display: flex; height: 22px; line-height: 22px; padding-left: 20px; gap: 6px; color: #a8a8a8; white-space: nowrap; }
.s-fc { padding: 3px 0 2px; height: 90px; }
.rf { display: grid; grid-template-columns: 64px 77px 72px; height: 21px; line-height: 21px; text-align: right; white-space: nowrap; }
.rf > :first-child { text-align: left; }
.s-rate { padding: 4px 0 1px; }
.rr { display: grid; grid-template-columns: 64px 74px 75px; height: 21px; line-height: 21px; text-align: right; white-space: nowrap; }
.rr > :first-child { text-align: left; }

/* overlays */
.watermark { position: absolute; left: 2428px; top: 12px; font: bold 33px "Noto Sans CJK SC", sans-serif; color: rgba(190, 190, 190, .22); white-space: nowrap; pointer-events: none; }
.subtitle { position: absolute; font: bold 31px "Noto Sans CJK SC", sans-serif; color: #fff; text-shadow: 2px 1px 0 #17b7d8, -1px 0 0 #9fefff; white-space: nowrap; line-height: 1; }
.s1 { left: 703px; top: 1280px; }
.s2 { left: 1354px; top: 1340px; font-size: 32px; }
.ime { position: absolute; left: 2383px; top: 1236px; width: 177px; height: 78px; }
.imebar { position: absolute; left: 16px; top: 5px; width: 161px; height: 25px; background: #f3f5f9; display: flex; align-items: center; gap: 10px; padding-left: 22px; }
.imebar .zh { color: #1677ff; font: bold 15px "Noto Sans CJK SC", sans-serif; }
.sogou { position: absolute; left: 3px; top: 1px; width: 29px; height: 27px; background: #f55a14; border-radius: 4px; transform: rotate(-10deg); text-align: center; }
.sogou span { font: italic bold 26px/27px "Liberation Sans", sans-serif; color: #fff; }
.net { position: absolute; left: 4px; top: 29px; width: 90px; height: 38px; border-radius: 0 0 14px 14px; background: #242a33; font-size: 10px; line-height: 20px; padding-left: 10px; color: #c0c8d0; }
.net b { font: 11px "Liberation Sans", sans-serif; color: #cfd6dd; margin: 0 1px 0 8px; }
.net small { font-size: 8px; color: #8a929a; }
.net .up { color: #2d9cff; } .net .down { color: #2fb344; }
.cpu { position: absolute; left: 64px; top: 18px; width: 58px; height: 58px; border-radius: 50%; background: #232933; color: #d8dde2; text-align: center; font: 24px/58px "Liberation Sans", sans-serif; }
.cpu small { font-size: 10px; margin-left: 4px; }
```

FILE: chart.js
```js
/* Data-driven drawing: candlesticks, volume bars and the intraday trace. */
(function () {
  var NS = 'http://www.w3.org/2000/svg';
  function el(parent, tag, attrs) {
    var node = document.createElementNS(NS, tag);
    for (var k in attrs) node.setAttribute(k, attrs[k]);
    parent.appendChild(node);
    return node;
  }
  var RED = '#ff3232', CYAN = '#54ffff', WHITE = '#ffffff';
  var COLOR = { r: RED, c: CYAN, w: WHITE };

  /* type, body top, body bottom, wick top, wick bottom (page pixels) */
  var K = [
    ['c',716,761,707,764],['r',706,756,706,777],['c',715,730,702,734],['r',658,717,658,717],
    ['c',612,638,612,665],['r',649,663,638,665],['r',642,657,635,657],['r',624,656,615,663],
    ['c',620,621,573,623],['r',609,618,594,623],['c',610,614,600,623],['c',606,618,592,622],
    ['r',590,621,589,629],['r',576,589,559,589],['r',488,589,488,598],['r',457,510,408,510],
    ['r',457,469,456,481],['c',457,513,433,515],['r',470,513,470,530],['r',433,490,419,499],
    ['c',445,455,417,462],['r',409,462,386,485],['c',377,415,331,417],['c',400,432,387,443],
    ['r',368,438,362,442],['r',327,378,320,385],['c',337,343,293,357],['c',350,390,343,441],
    ['c',397,409,393,437],['r',305,382,305,397],['c',287,297,250,323],['c',315,325,307,362],
    ['r',319,331,303,353],['w',330,331,311,338],['c',343,345,318,371],['r',326,346,298,362],
    ['c',335,385,332,397],['c',371,372,320,384],['r',314,377,306,393],['r',289,326,276,326],
    ['c',269,294,251,315],['r',257,270,204,287],['c',267,352,259,353],['r',243,350,243,350],
    ['c',243,299,243,303],['r',184,311,184,330],['c',130,184,92,205],['r',150,207,109,216],
    ['r',110,177,43,210],['c',83,93,50,126],['c',110,162,110,178],['c',156,160,88,177]
  ];
  var VOL = [1020,1016,1029,1046,992,1027,1037,1022,1005,1026,1038,1039,1024,1015,975,904,982,974,975,930,976,947,941,989,965,958,977,950,1002,987,896,964,976,1005,996,976,970,978,951,944,974,901,954,938,940,933,823,903,876,888,950,948];
  var X0 = 214.5, DX = 33.7, W = 25, BASE = 1060;

  var gK = document.getElementById('candles');
  var gV = document.getElementById('volumes');
  K.forEach(function (d, i) {
    var cx = Math.round(X0 + DX * i) + 0.5;
    var col = COLOR[d[0]];
    var left = Math.round(cx - W / 2);
    var vt = VOL[i];
    /* a hollow candle hides its wick behind the open body */
    if (d[0] === 'r') {
      el(gK, 'line', { x1: cx, x2: cx, y1: d[3], y2: d[1], stroke: col, 'shape-rendering': 'crispEdges' });
      el(gK, 'line', { x1: cx, x2: cx, y1: d[2], y2: d[4], stroke: col, 'shape-rendering': 'crispEdges' });
      el(gK, 'rect', { x: left + .5, y: d[1] + .5, width: W - 1, height: d[2] - d[1], fill: 'none', stroke: col, 'shape-rendering': 'crispEdges' });
      el(gV, 'rect', { x: left + .5, y: vt + .5, width: W - 1, height: BASE - vt - 1, fill: 'none', stroke: RED, 'shape-rendering': 'crispEdges' });
    } else {
      el(gK, 'line', { x1: cx, x2: cx, y1: d[3], y2: d[4], stroke: col, 'shape-rendering': 'crispEdges' });
      el(gK, 'rect', { x: left, y: d[1], width: W, height: Math.max(1, d[2] - d[1]), fill: col, 'shape-rendering': 'crispEdges' });
      el(gV, 'rect', { x: left, y: vt, width: W, height: BASE - vt, fill: CYAN, 'shape-rendering': 'crispEdges' });
    }
    if (i === 3) el(gV, 'rect', { x: left + 7, y: vt + 1, width: 11, height: BASE - vt - 1, fill: '#ff00ff' });
    if (i === 4 || i === 30) el(gV, 'rect', { x: left + 7, y: vt, width: 11, height: BASE - vt, fill: '#ffff00' });
  });

  /* Intraday trace: points read at 3x from the reference, origin (2100,400) */
  function toPath(flat) {
    var s = '';
    for (var i = 0; i < flat.length; i += 2) {
      s += (i ? 'L' : 'M') + (2100 + flat[i] / 3).toFixed(1) + ' ' + (400 + flat[i + 1] / 3).toFixed(1);
    }
    return s;
  }
  var LINE = [22,935,24,1145,28,1035,34,758,38,960,42,880,46,950,50,815,55,960,60,758,64,960,70,1140,74,970,80,1030,85,1030,90,960,100,760,102,425,106,300,110,95,112,420,114,190,118,410,122,255,126,380,130,250,135,400,140,350,146,275,150,370,155,420,160,320,165,400,170,350,178,420,182,510,190,510,198,530,204,600,208,505,214,630,218,600,224,530,228,610,232,530,238,610,246,580,254,545,262,600,268,770,272,680,276,700,282,600,288,740,296,600,304,510,312,425,318,540,322,480,332,650,342,620,352,520,362,630,368,710,374,650,380,770,388,850,392,760,400,790,408,800,414,850,420,885,426,825,434,860,442,820,455,790,462,820,470,780,478,635,484,740,488,670,494,840,500,820,506,900,516,990,526,830,532,890,540,890,548,965,556,955,566,952];
  var AVG = [22,1000,30,1020,36,950,50,925,64,910,74,945,94,950,102,850,112,670,126,620,150,590,180,577,250,577,300,583,370,580,430,593,490,598,530,612,566,632];
  document.getElementById('mline').setAttribute('d', toPath(LINE));
  document.getElementById('mavg').setAttribute('d', toPath(AVG));

  /* Intraday volume: x,top in the reference crop, origin (2100,800), y scale 2.796 */
  var SPIKES = [[22,1165,'g'],[26,1225,'g'],[30,1320,'g'],[33,1330,'g'],[36,1340,'g'],[40,1345,'g'],[68,1248,'g'],[72,1145,'r'],[76,1370,'g'],[80,1380,'w'],[94,1340,'r'],[100,940,'r'],[104,716,'r'],[106,980,'g'],[108,708,'r'],[112,745,'g'],[116,1185,'g'],[122,1170,'g'],[126,1295,'g'],[130,1320,'g'],[140,1300,'r'],[145,1345,'r'],[150,1350,'r'],[156,1345,'r'],[165,1395,'r'],[180,1365,'g'],[205,1318,'g'],[265,1358,'g'],[335,1240,'g'],[380,1372,'g'],[515,1345,'g'],[545,1400,'g'],[553,1362,'w'],[560,1370,'w'],[568,1338,'w']];
  var gM = document.getElementById('mvol');
  var VCOL = { g: '#00e600', r: '#ff3232', w: '#ffffff' };
  var CYCLE = ['g','g','r','g','g','r','g','w','g','r'];
  var over = {};
  SPIKES.forEach(function (s) { over[Math.round(2100 + s[0] / 3)] = s; });
  for (var x = 2108, n = 0; x <= 2289; x++, n++) {
    var sp = over[x], yTop, col;
    if (sp) {
      yTop = 800 + sp[1] / 2.796;
      col = sp[2];
    } else {
      var early = x < 2150 ? 34 : 6;
      var h = early + ((n * 37) % 23) * (x < 2150 ? 1 : (n % 4 === 0 ? .9 : .45));
      yTop = 1330 - h;
      col = CYCLE[(n * 3) % CYCLE.length];
    }
    el(gM, 'line', { x1: x + .5, x2: x + .5, y1: yTop, y2: 1330, stroke: VCOL[col], 'shape-rendering': 'crispEdges' });
  }
})();
```
